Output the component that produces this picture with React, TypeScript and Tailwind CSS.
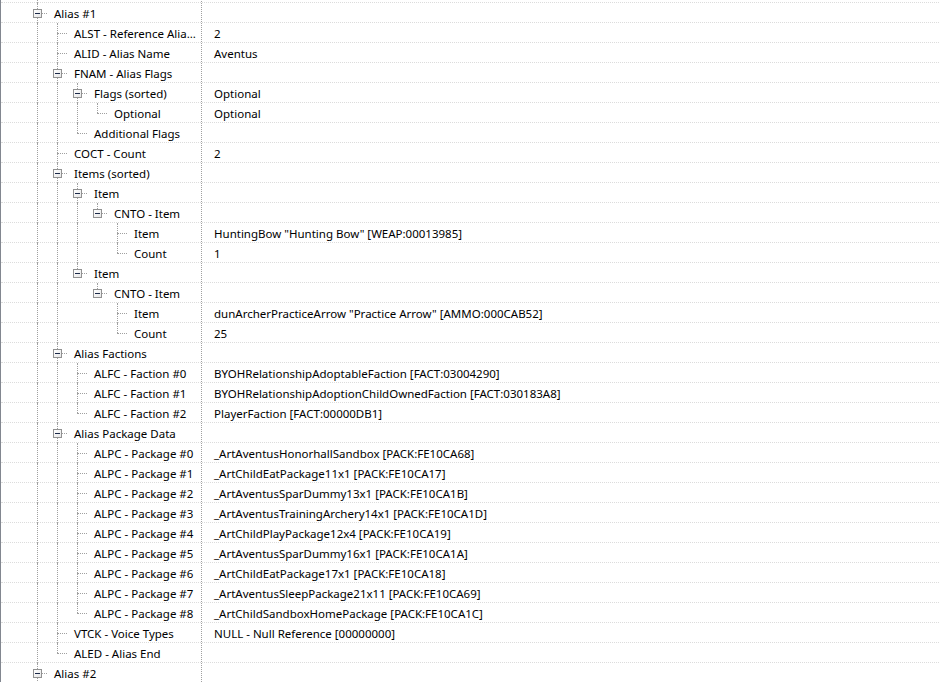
import React from "react";

type Node = {
  label: string;
  value?: string;
  children?: Node[];
  open?: boolean;
};

type FlatRow = {
  key: string;
  label: string;
  value?: string;
  guides: boolean[];
  last: boolean;
  open: boolean;
  blank?: boolean;
};

const packages = [
  "_ArtAventusHonorhallSandbox [PACK:FE10CA68]",
  "_ArtChildEatPackage11x1 [PACK:FE10CA17]",
  "_ArtAventusSparDummy13x1 [PACK:FE10CA1B]",
  "_ArtAventusTrainingArchery14x1 [PACK:FE10CA1D]",
  "_ArtChildPlayPackage12x4 [PACK:FE10CA19]",
  "_ArtAventusSparDummy16x1 [PACK:FE10CA1A]",
  "_ArtChildEatPackage17x1 [PACK:FE10CA18]",
  "_ArtAventusSleepPackage21x11 [PACK:FE10CA69]",
  "_ArtChildSandboxHomePackage [PACK:FE10CA1C]",
];

const tree: Node[] = [
  {
    label: "Alias #1",
    children: [
      { label: "ALST - Reference Alia...", value: "2" },
      { label: "ALID - Alias Name", value: "Aventus" },
      {
        label: "FNAM - Alias Flags",
        children: [
          {
            label: "Flags (sorted)",
            value: "Optional",
            children: [{ label: "Optional", value: "Optional" }],
          },
          { label: "Additional Flags" },
        ],
      },
      { label: "COCT - Count", value: "2" },
      {
        label: "Items (sorted)",
        children: [
          {
            label: "Item",
            children: [
              {
                label: "CNTO - Item",
                children: [
                  { label: "Item", value: 'HuntingBow "Hunting Bow" [WEAP:00013985]' },
                  { label: "Count", value: "1" },
                ],
              },
            ],
          },
          {
            label: "Item",
            children: [
              {
                label: "CNTO - Item",
                children: [
                  {
                    label: "Item",
                    value: 'dunArcherPracticeArrow "Practice Arrow" [AMMO:000CAB52]',
                  },
                  { label: "Count", value: "25" },
                ],
              },
            ],
          },
        ],
      },
      {
        label: "Alias Factions",
        children: [
          { label: "ALFC - Faction #0", value: "BYOHRelationshipAdoptableFaction [FACT:03004290]" },
          {
            label: "ALFC - Faction #1",
            value: "BYOHRelationshipAdoptionChildOwnedFaction [FACT:030183A8]",
          },
          { label: "ALFC - Faction #2", value: "PlayerFaction [FACT:00000DB1]" },
        ],
      },
      {
        label: "Alias Package Data",
        children: packages.map((p, i) => ({ label: `ALPC - Package #${i}`, value: p })),
      },
      { label: "VTCK - Voice Types", value: "NULL - Null Reference [00000000]" },
      { label: "ALED - Alias End" },
    ],
  },
  { label: "Alias #2", open: true, children: [] },
];

function flatten(nodes: Node[], guides: boolean[], top: boolean, out: FlatRow[], path: string) {
  nodes.forEach((n, i) => {
    // top-level aliases keep going above and below the visible part
    const last = top ? false : i === nodes.length - 1;
    const open = !!n.open || (n.children?.length ?? 0) > 0;
    out.push({ key: `${path}-${i}`, label: n.label, value: n.value, guides, last, open });
    if (n.children && n.children.length) {
      flatten(n.children, [...guides, !last], false, out, `${path}-${i}`);
    }
  });
  return out;
}

const rows: FlatRow[] = [
  { key: "prev", label: "", guides: [true], last: false, open: false, blank: true },
  ...flatten(tree, [], true, [], "r"),
];

function Row({ row }: { row: FlatRow }) {
  return (
    <div className="flex h-5 shrink-0 border-b border-dotted border-[#dcdcdc]">
      <div className="flex w-[201px] shrink-0 border-r border-dotted border-[#a0a0a0] pl-[26px]">
        {row.guides.map((g, i) => (
          <div key={i} className="relative h-5 w-5 shrink-0">
            {g && <span className="absolute left-[10px] top-0 h-5 border-l border-dotted border-[#a0a0a0]" />}
          </div>
        ))}
        {!row.blank && (
          <div className="relative h-5 w-5 shrink-0">
            <span
              className={
                row.last
                  ? "absolute left-[10px] top-0 h-[10px] border-l border-dotted border-[#a0a0a0]"
                  : "absolute left-[10px] top-0 h-5 border-l border-dotted border-[#a0a0a0]"
              }
            />
            <span className="absolute left-[10px] top-[10px] w-[10px] border-t border-dotted border-[#a0a0a0]" />
            {row.open && (
              <span className="absolute left-[6px] top-[6px] h-[9px] w-[9px] border border-[#919191] bg-gradient-to-br from-white to-[#e6e6e6]">
                <span className="absolute left-[1px] top-[3px] h-px w-[5px] bg-[#1c2a4a]" />
              </span>
            )}
          </div>
        )}
        {!row.blank && (
          <span className="ml-[7px] whitespace-nowrap pt-px text-[11.5px] leading-[19px] text-black">{row.label}</span>
        )}
      </div>
      <div className="whitespace-nowrap pl-[12px] pt-px text-[11.5px] leading-[19px] text-black">{row.value}</div>
    </div>
  );
}

export default function App() {
  return (
    <div className="h-[682px] w-[939px] overflow-hidden border-l border-[#828790] bg-white font-['Noto_Sans',sans-serif]">
      <div className="-mt-[17px] flex flex-col">
        {rows.map((r) => (
          <Row key={r.key} row={r} />
        ))}
      </div>
    </div>
  );
}
